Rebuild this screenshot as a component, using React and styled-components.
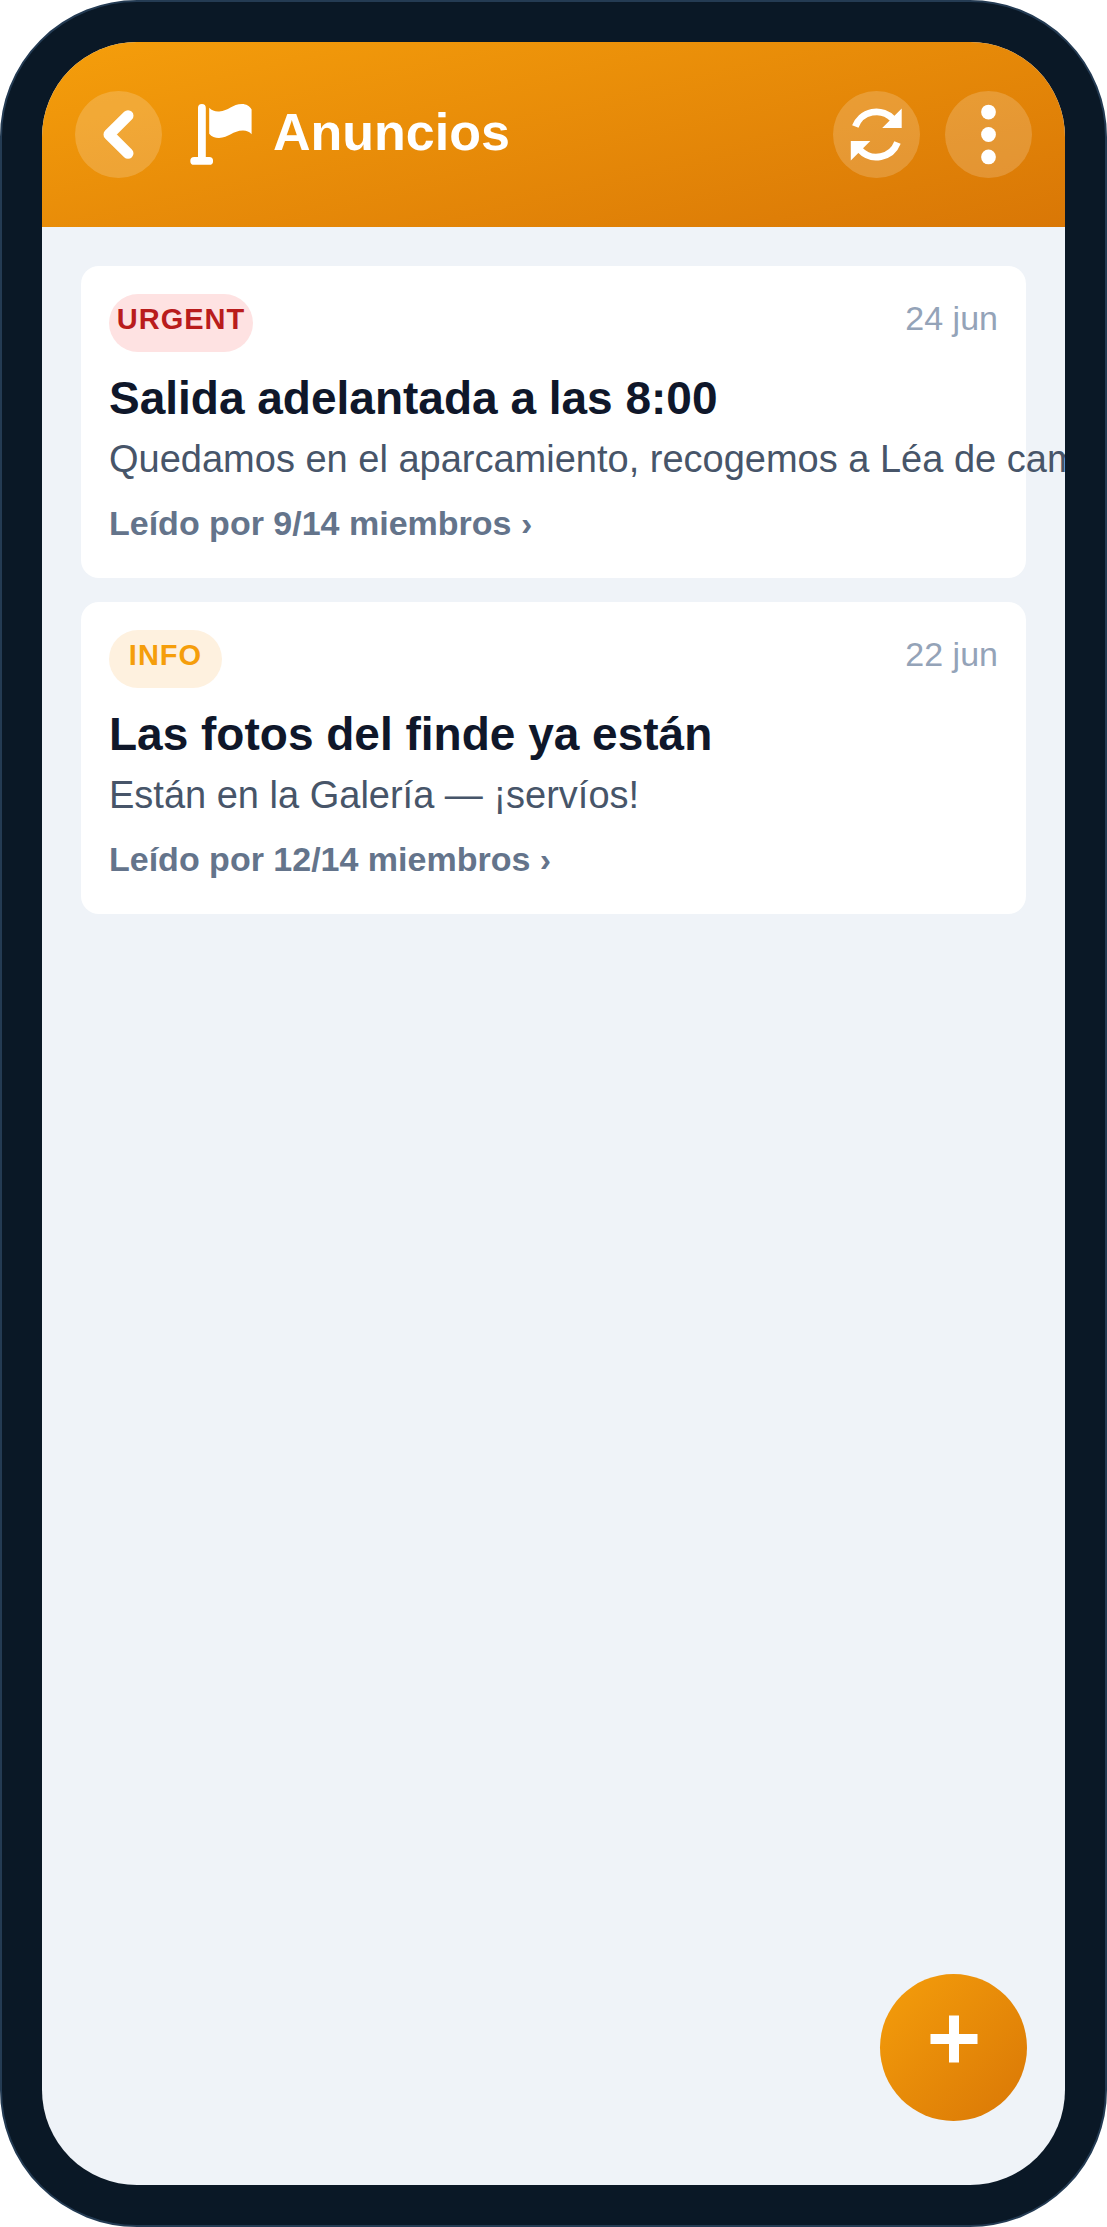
import styled, { createGlobalStyle } from "styled-components"

const posts = [
  {
    id: 1,
    label: 'URGENT',
    tone: 'urgent',
    date: '24 jun',
    title: 'Salida adelantada a las 8:00',
    text: 'Quedamos en el aparcamiento, recogemos a Léa de camino.',
    read: 9
  },
  {
    id: 2,
    label: 'INFO',
    tone: 'info',
    date: '22 jun',
    title: 'Las fotos del finde ya están',
    text: 'Están en la Galería — ¡servíos!',
    read: 12
  }
]

const tones = {
  urgent: {color: '#b91c1c', background: '#fee2e2', width: '144px'},
  info: {color: '#f59e0b', background: '#fef1df', width: '113px'}
}

const BackIcon = () => (
  <svg width="87" height="87" viewBox="0 0 87 87" fill="none" stroke="currentColor" strokeWidth="11" strokeLinecap="round" strokeLinejoin="round">
    <path d="M53 24.7 34 43.5 53 62.3" />
  </svg>
)

const FlagIcon = () => (
  <svg width="62" height="62" viewBox="0 0 62 62" fill="currentColor" aria-hidden="true">
    <path d="M8 53V4a3.9 3.9 0 0 1 7.8 0v49h3.4a3.9 3.9 0 0 1 0 7.8H4.2a3.9 3.9 0 0 1 0-7.8z" />
    <path d="M19.2 3.8c2.6 3 6 3.8 10 3.6C38.5 7 42.5 0 52 0c4.2 0 7.8 2.2 9.6 5.5v24.800c-2.200-2.600-5-3.700-8.600-3.700-10 0-14.500 7.400-24 7.400-4 0-7.400-1.400-9.800-4.300z" />
  </svg>
)

const SyncIcon = () => (
  <svg width="87" height="87" viewBox="0 0 87 87" fill="none">
    <g stroke="currentColor" strokeWidth="6.8">
      <path d="M22.3 35.5A22.6 22.6 0 0 1 60 28" />
      <path d="M64.5 51.5A22.6 22.6 0 0 1 27 59" />
    </g>
    <path d="M68.7 17.5V37H49.2zM17.8 69.5V50h19.5z" fill="currentColor" />
  </svg>
)

const MenuIcon = () => (
  <svg width="87" height="87" viewBox="0 0 87 87" fill="currentColor">
    <circle cx="43.5" cy="21.1" r="7.4" />
    <circle cx="43.5" cy="43.5" r="7.4" />
    <circle cx="43.5" cy="65.9" r="7.4" />
  </svg>
)

const PlusIcon = () => (
  <svg width="48" height="48" viewBox="0 0 48 48" fill="currentColor">
    <path d="M19 .5h10V19h18.5v10H29v18.5H19V29H.5V19H19z" />
  </svg>
)

const Post = ({post}) => (
  <Card>
    <CardTop>
      <Badge $tone={tones[post.tone]}>{post.label}</Badge>
      <PostDate>{post.date}</PostDate>
    </CardTop>
    <PostTitle>{post.title}</PostTitle>
    <PostText>{post.text}</PostText>
    <ReadButton type="button">Leído por {post.read}/14 miembros ›</ReadButton>
  </Card>
)

const App = () => {
  return (
    <>
      <GlobalStyle />
      <Phone>
        <Screen>
          <Header>
            <RoundButton type="button" aria-label="Volver">
              <BackIcon />
            </RoundButton>
            <Heading>
              <FlagIcon />
              <h1>Anuncios</h1>
            </Heading>
            <Actions>
              <RoundButton type="button" aria-label="Actualizar">
                <SyncIcon />
              </RoundButton>
              <RoundButton type="button" aria-label="Menú">
                <MenuIcon />
              </RoundButton>
            </Actions>
          </Header>
          <List>
            {posts.map(post => (
              <Post key={post.id} post={post} />
            ))}
          </List>
          <AddButton type="button" aria-label="Nuevo anuncio">
            <PlusIcon />
          </AddButton>
        </Screen>
      </Phone>
    </>
  )
}

const GlobalStyle = createGlobalStyle`
  * {
    box-sizing: border-box;
    margin: 0;
    padding: 0;
  }
  body {
    background: white;
    font-family: "Liberation Sans", Arial, sans-serif;
  }
  button {
    border: none;
    font-family: inherit;
    cursor: pointer;
  }
  svg {
    display: block;
    flex-shrink: 0;
  }
`

const Phone = styled.div`
  display: flex;
  min-height: 100vh;
  padding: 40px;
  border: 2px solid #243b53;
  border-radius: 137px;
  background: #0a1826;
`

const Screen = styled.div`
  position: relative;
  display: flex;
  flex-direction: column;
  flex: 1;
  min-width: 0;
  overflow: hidden;
  border-radius: 95px;
  background: #eff3f8;
`

const Header = styled.header`
  display: flex;
  align-items: center;
  padding: 49px 33px;
  color: white;
  background: linear-gradient(167deg, #f59e0b, #d97706);
`

const RoundButton = styled.button`
  width: 87px;
  height: 87px;
  flex-shrink: 0;
  border-radius: 50%;
  color: white;
  background: rgba(255, 255, 255, 0.18);
`

const Heading = styled.div`
  display: flex;
  align-items: center;
  gap: 21px;
  margin-left: 28px;

  h1 {
    padding-bottom: 6px;
    font-size: 52px;
    line-height: 60px;
  }
`

const Actions = styled.div`
  display: flex;
  gap: 25px;
  margin-left: auto;
`

const List = styled.main`
  display: flex;
  flex-direction: column;
  gap: 24px;
  padding: 39px;
`

const Card = styled.article`
  padding: 28px 28px 36px;
  border-radius: 18px;
  background: white;
`

const CardTop = styled.div`
  display: flex;
  align-items: flex-start;
  justify-content: space-between;
`

const Badge = styled.span`
  width: ${({$tone}) => $tone.width};
  padding-bottom: 8px;
  border-radius: 29px;
  color: ${({$tone}) => $tone.color};
  background: ${({$tone}) => $tone.background};
  font-size: 29px;
  font-weight: 700;
  line-height: 50px;
  letter-spacing: 1px;
  text-align: center;
`

const PostDate = styled.time`
  color: #94a3b8;
  font-size: 34px;
  line-height: 48px;
`

const PostTitle = styled.h2`
  margin-top: 20px;
  color: #0f172a;
  font-size: 46px;
  line-height: 52px;
`

const PostText = styled.p`
  margin-top: 13px;
  color: #475569;
  font-size: 38px;
  line-height: 44px;
  white-space: nowrap;
`

const ReadButton = styled.button`
  display: block;
  margin-top: 23px;
  color: #64748b;
  background: none;
  font-size: 34px;
  font-weight: 700;
  line-height: 38px;
`

const AddButton = styled.button`
  position: absolute;
  right: 38px;
  bottom: 64px;
  display: flex;
  align-items: center;
  justify-content: center;
  width: 147px;
  height: 147px;
  padding-bottom: 18px;
  border-radius: 50%;
  color: white;
  background: linear-gradient(135deg, #f59e0b, #d97706);
`

export default App
